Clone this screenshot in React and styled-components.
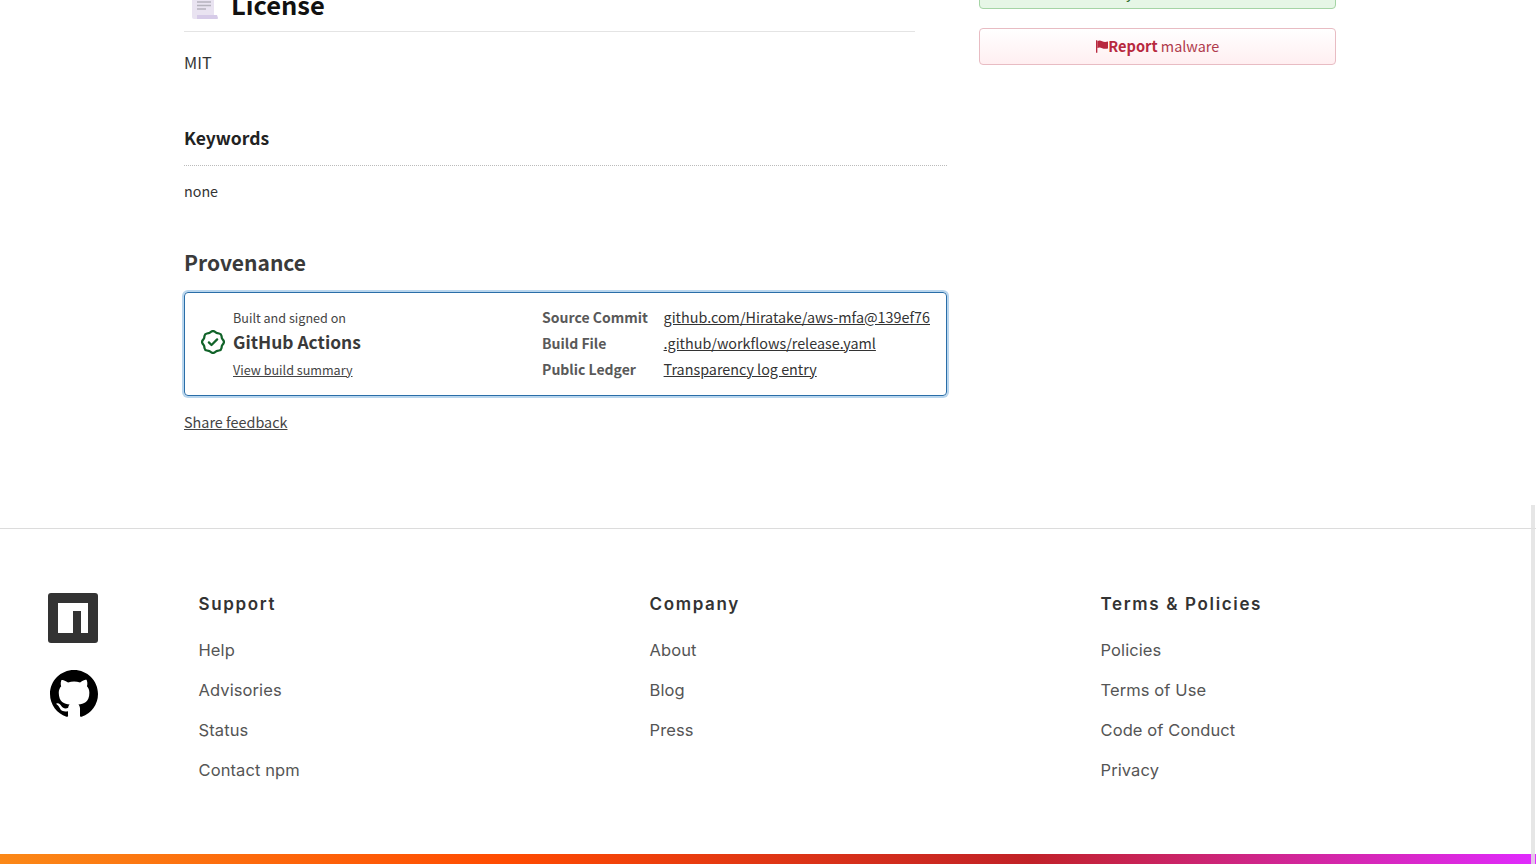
import React from "react";
import styled, { createGlobalStyle } from "styled-components";

const Global = createGlobalStyle`
  html, body { margin: 0; padding: 0; background: #fff; overflow: hidden; }
  body { font-family: "Noto Sans CJK JP", "Noto Sans", sans-serif; color: #333; }
`;

const Page = styled.div`
  position: relative;
  width: 1536px;
  height: 864px;
  overflow: hidden;
  display: flex;
  flex-direction: column;
`;
const Main = styled.main`
  height: 528px;
  flex: none;
  padding: 0 200px 0 184px;
  display: grid;
  grid-template-columns: 763px 357px;
  column-gap: 32px;
  align-items: start;
`;
const LeftColumn = styled.div`
  display: flex;
  flex-direction: column;
  align-items: stretch;
`;
const LicenseHead = styled.h3`
  margin: -20px 32px 0 0;
  height: 52px;
  box-sizing: border-box;
  padding-left: 8px;
  border-bottom: 1px solid #e4e4e4;
  display: flex;
  align-items: flex-start;
  gap: 13px;
  font-size: 25.5px;
  font-weight: 600;
  color: #111;
  line-height: 48px;
`;
const LicenseText = styled.p`
  margin: 18px 0 0;
  font-size: 16.2px;
  line-height: 24px;
  color: #333;
`;
const KeywordsHead = styled.h3`
  margin: 51px 0 0;
  height: 41px;
  box-sizing: border-box;
  border-bottom: 1px dotted #bbb;
  font-size: 17.5px;
  font-weight: 600;
  line-height: 26px;
  color: #222;
`;
const KeywordsText = styled.p`
  margin: 13px 0 0;
  font-size: 14.3px;
  line-height: 24px;
  color: #333;
`;
const ProvenanceHead = styled.h2`
  margin: 43px 0 0;
  font-size: 21px;
  font-weight: 600;
  line-height: 32px;
  color: #3a3a3a;
`;
const Card = styled.section`
  margin-top: 14px;
  height: 104px;
  box-sizing: border-box;
  border: 1.5px solid #2a6ea8;
  border-radius: 4px;
  box-shadow: 0 0 0 2px #b9d6ee;
  padding: 0 16px;
  display: flex;
  align-items: center;
  justify-content: space-between;
`;
const Builder = styled.div`
  display: flex;
  align-items: center;
  gap: 8px;
`;
const BuilderText = styled.div`
  display: flex;
  flex-direction: column;
  padding-top: 4px;
  color: #444;
`;
const BuiltOn = styled.span`
  font-size: 12.6px;
  line-height: 22px;
  color: #444;
`;
const BuilderName = styled.strong`
  font-size: 17.4px;
  font-weight: 600;
  line-height: 26px;
  color: #3a3a3a;
`;
const SummaryLink = styled.a`
  font-size: 12.6px;
  line-height: 30px;
  color: #444;
  text-decoration: underline;
`;
const Details = styled.dl`
  margin: 0 0 2px;
  display: grid;
  grid-template-columns: 121.5px auto;
  grid-auto-rows: 26px;
  align-items: center;
`;
const Term = styled.dt`
  font-size: 14px;
  font-weight: 600;
  color: #595959;
`;
const Value = styled.dd`
  margin: 0 0 2px;
  font-size: 14.35px;
  color: #333;
  text-decoration: underline;
`;
const Feedback = styled.a`
  margin-top: 14px;
  align-self: flex-start;
  font-size: 14.4px;
  line-height: 24px;
  color: #444;
  text-decoration: underline;
`;
const Sidebar = styled.aside`
  display: flex;
  flex-direction: column;
  gap: 19px;
  margin-top: -28px;
`;
const SideButton = styled.a`
  height: 37px;
  box-sizing: border-box;
  border-radius: 4px;
  display: flex;
  align-items: center;
  justify-content: center;
  gap: 0;
  padding-bottom: 2px;
  font-size: 14.4px;
  line-height: 24px;
  border: 1px solid ${p => (p.$tone === "green" ? "#a5d4a5" : "#e8bcc3")};
  color: ${p => (p.$tone === "green" ? "#2b6b2b" : "#b03a4c")};
  background: ${p =>
    p.$tone === "green"
      ? "#e6f6e6"
      : "linear-gradient(#ffffff, #ffeff1)"};
`;
const RunKit = styled(SideButton)`
  padding: 3px 0 0;
`;
const ReportWord = styled.strong`
  font-size: 14.6px;
  font-weight: 600;
  color: #b8293f;
  white-space: pre;
`;
const Footer = styled.footer`
  flex: 1;
  border-top: 1px solid #dcdcdc;
  padding: 64px 0 0 48px;
  display: grid;
  grid-template-columns: 150.5px repeat(3, 451px);
  align-items: start;
`;
const Logos = styled.div`
  display: flex;
  flex-direction: column;
  gap: 27px;
  align-items: flex-start;
`;
const GithubWrap = styled.span`
  display: block;
  margin-left: 2px;
  height: 48px;
`;
const FooterColumn = styled.nav`
  display: flex;
  flex-direction: column;
`;
const FooterTitle = styled.h3`
  margin: 0 0 15px;
  font-family: Inter, "Noto Sans", sans-serif;
  font-size: 17px;
  font-weight: 600;
  line-height: 22px;
  letter-spacing: 1.65px;
  color: #333;
`;
const FooterLink = styled.a`
  font-family: Inter, "Noto Sans", sans-serif;
  font-size: 16.5px;
  line-height: 40px;
  letter-spacing: 0.1px;
  color: #555;
`;
const Rainbow = styled.div`
  height: 10px;
  flex: none;
  background: linear-gradient(90deg, #fb8817, #ff4b01 33%, #c12127 67%, #e02aff);
`;
const ScrollThumb = styled.div`
  position: absolute;
  top: 505px;
  bottom: 0;
  right: 1px;
  width: 4px;
  background: rgba(226, 226, 226, 0.85);
`;

const ScrollIcon = () => (
  <svg width="26" height="40" viewBox="0 0 26 40" style={{ flex: "none" }}>
    <path d="M0 0h22v38a2 2 0 0 1-2 1H2a2 2 0 0 1-2-2z" fill="#e9e3f1" />
    <path d="M5 35h20l1 3a1 1 0 0 1-1 1H5z" fill="#d6cbe8" />
    <path d="M5 22h14M5 25.5h14M5 29h9" stroke="#b5b2bd" strokeWidth="1.4" />
  </svg>
);
const VerifiedIcon = () => (
  <svg width="24" height="24" viewBox="0 0 16 16" fill="#116329" style={{ flex: "none", marginTop: -4 }}>
    <path d="m9.585.52.929.68c.153.112.331.186.518.215l1.138.175a2.678 2.678 0 0 1 2.24 2.24l.174 1.139c.029.187.103.365.215.518l.68.928a2.677 2.677 0 0 1 0 3.17l-.68.928a1.174 1.174 0 0 0-.215.518l-.175 1.138a2.678 2.678 0 0 1-2.241 2.241l-1.138.175a1.17 1.17 0 0 0-.518.215l-.928.68a2.677 2.677 0 0 1-3.17 0l-.928-.68a1.174 1.174 0 0 0-.518-.215L3.83 14.41a2.678 2.678 0 0 1-2.24-2.24l-.175-1.138a1.17 1.17 0 0 0-.215-.518l-.68-.928a2.677 2.677 0 0 1 0-3.17l.68-.928c.112-.153.186-.331.215-.518l.175-1.14a2.678 2.678 0 0 1 2.24-2.24l1.139-.175c.187-.029.365-.103.518-.215l.928-.68a2.677 2.677 0 0 1 3.17 0ZM7.303 1.728l-.927.68a2.67 2.67 0 0 1-1.18.489l-1.137.174a1.179 1.179 0 0 0-.987.987l-.174 1.136a2.677 2.677 0 0 1-.489 1.18l-.68.928a1.18 1.18 0 0 0 0 1.394l.68.927c.256.348.424.753.489 1.18l.174 1.137c.078.509.478.909.987.987l1.136.174a2.67 2.67 0 0 1 1.18.489l.928.68c.414.305.979.305 1.394 0l.927-.68a2.67 2.67 0 0 1 1.18-.489l1.137-.174a1.18 1.18 0 0 0 .987-.987l.174-1.136a2.67 2.67 0 0 1 .489-1.18l.68-.928a1.176 1.176 0 0 0 0-1.394l-.68-.927a2.686 2.686 0 0 1-.489-1.18l-.174-1.137a1.179 1.179 0 0 0-.987-.987l-1.136-.174a2.677 2.677 0 0 1-1.18-.489l-.928-.68a1.176 1.176 0 0 0-1.394 0ZM11.28 6.78l-3.75 3.75a.75.75 0 0 1-1.06 0L4.72 8.78a.751.751 0 0 1 .018-1.042.751.751 0 0 1 1.042-.018L7 8.94l3.22-3.22a.751.751 0 0 1 1.042.018.751.751 0 0 1 .018 1.042Z" />
  </svg>
);
const FlagIcon = () => (
  <svg width="12.5" height="13" viewBox="0 0 13 13" style={{ flex: "none", marginTop: 2 }}>
    <path d="M0 0h1.4v13H0z" fill="#b8293f" />
    <path d="M1.4 1c2-1.2 3.4-.6 5 .1 1.7.7 3.4 1 6.6.1v7.2c-3 .9-5 .5-6.6-.2-1.7-.7-3-1.1-5-.1z" fill="#b8293f" />
  </svg>
);
const NpmLogo = () => (
  <svg width="50" height="50" viewBox="0 0 50 50" style={{ display: "block" }}>
    <rect width="50" height="50" rx="3" fill="#333" />
    <path d="M10 10h30v30h-7V18h-8v22H10z" fill="#fff" />
  </svg>
);
const GithubLogo = () => (
  <svg width="48" height="48" viewBox="0 0 16 16" fill="#000" style={{ display: "block" }}>
    <path d="M8 0C3.58 0 0 3.58 0 8c0 3.54 2.29 6.53 5.47 7.59.4.07.55-.17.55-.38 0-.19-.01-.82-.01-1.49-2.01.37-2.53-.49-2.69-.94-.09-.23-.48-.94-.82-1.13-.28-.15-.68-.52-.01-.53.63-.01 1.08.58 1.23.82.72 1.21 1.87.87 2.33.66.07-.52.28-.87.51-1.07-1.78-.2-3.64-.89-3.64-3.95 0-.87.31-1.59.82-2.15-.08-.2-.36-1.02.08-2.12 0 0 .67-.21 2.2.82.64-.18 1.32-.27 2-.27.68 0 1.36.09 2 .27 1.53-1.04 2.2-.82 2.2-.82.44 1.1.16 1.92.08 2.12.51.56.82 1.27.82 2.15 0 3.07-1.87 3.75-3.65 3.95.29.25.54.73.54 1.48 0 1.07-.01 1.93-.01 2.2 0 .21.15.46.55.38A8.013 8.013 0 0016 8c0-4.42-3.58-8-8-8z" />
  </svg>
);

const footerColumns = [
  { title: "Support", links: ["Help", "Advisories", "Status", "Contact npm"] },
  { title: "Company", links: ["About", "Blog", "Press"] },
  { title: "Terms & Policies", links: ["Policies", "Terms of Use", "Code of Conduct", "Privacy"] },
];
const details = [
  ["Source Commit", "github.com/Hiratake/aws-mfa@139ef76"],
  ["Build File", ".github/workflows/release.yaml"],
  ["Public Ledger", "Transparency log entry"],
];

export default function App() {
  return (
    <Page>
      <Global />
      <Main>
        <LeftColumn>
          <LicenseHead>
            <ScrollIcon />
            License
          </LicenseHead>
          <LicenseText>MIT</LicenseText>
          <KeywordsHead>Keywords</KeywordsHead>
          <KeywordsText>none</KeywordsText>
          <ProvenanceHead>Provenance</ProvenanceHead>
          <Card>
            <Builder>
              <VerifiedIcon />
              <BuilderText>
                <BuiltOn>Built and signed on</BuiltOn>
                <BuilderName>GitHub Actions</BuilderName>
                <SummaryLink>View build summary</SummaryLink>
              </BuilderText>
            </Builder>
            <Details>
              {details.map(([term, value]) => (
                <React.Fragment key={term}>
                  <Term>{term}</Term>
                  <Value>{value}</Value>
                </React.Fragment>
              ))}
            </Details>
          </Card>
          <Feedback>Share feedback</Feedback>
        </LeftColumn>
        <Sidebar>
          <RunKit $tone="green">Try on RunKit</RunKit>
          <SideButton $tone="red">
            <FlagIcon />
            <ReportWord>Report </ReportWord>malware
          </SideButton>
        </Sidebar>
      </Main>
      <Footer>
        <Logos>
          <NpmLogo />
          <GithubWrap>
            <GithubLogo />
          </GithubWrap>
        </Logos>
        {footerColumns.map(col => (
          <FooterColumn key={col.title}>
            <FooterTitle>{col.title}</FooterTitle>
            {col.links.map(link => (
              <FooterLink key={link}>{link}</FooterLink>
            ))}
          </FooterColumn>
        ))}
      </Footer>
      <Rainbow />
      <ScrollThumb />
    </Page>
  );
}
